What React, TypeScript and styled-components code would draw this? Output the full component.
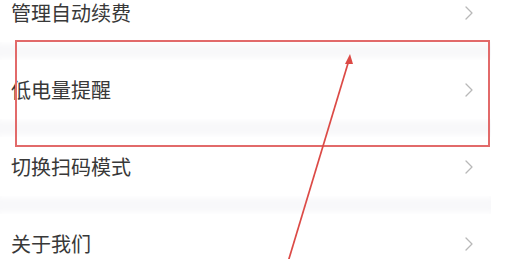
import React from 'react';
import styled, { createGlobalStyle } from 'styled-components';

const GlobalStyle = createGlobalStyle`
    html, body {
        margin: 0;
        padding: 0;
        background: #ffffff;
        overflow: hidden;
    }
    body {
        font-family: 'Noto Sans CJK SC', 'Noto Sans', sans-serif;
    }
`;

const items = ['管理自动续费', '低电量提醒', '切换扫码模式', '关于我们'];

const Chevron = () => (
    <svg width="8" height="14" viewBox="0 0 8 14">
        <polyline
            points="1,1 7,7 1,13"
            fill="none"
            stroke="#b8b8b8"
            strokeWidth="1.3"
            strokeLinecap="round"
            strokeLinejoin="round"
        />
    </svg>
);

const App = () => {
    return (
        <Page>
            <GlobalStyle />
            <List>
                {items.map((label, i) => (
                    <Row key={label} $first={i === 0}>
                        <Label>{label}</Label>
                        <Chevron />
                    </Row>
                ))}
            </List>
            <Highlight />
            <Arrow width="507" height="259" viewBox="0 0 507 259">
                <line x1="288" y1="262" x2="349" y2="60" stroke="#dc4a46" strokeWidth="1.7" />
                <polygon points="350,54 345,64 353,64" fill="#dc4a46" />
            </Arrow>
        </Page>
    );
};

const Page = styled.div`
    position: relative;
    width: 507px;
    height: 259px;
    overflow: hidden;
    background: #ffffff;
`;

const List = styled.div`
    width: 491px;
    display: flex;
    flex-direction: column;
    gap: 18px;
    background: #f8f8fa;
`;

const Row = styled.div<{ $first?: boolean }>`
    box-sizing: border-box;
    height: ${(p) => (p.$first ? '42px' : '59px')};
    display: flex;
    align-items: center;
    justify-content: space-between;
    padding: ${(p) => (p.$first ? '0 18px 16px 11px' : '0 18px 0 11px')};
    background: #ffffff;
    box-shadow: 0 0 6px 2px #ffffff;
`;

const Label = styled.span`
    font-size: 20px;
    line-height: 1;
    color: #383838;
`;

const Highlight = styled.div`
    position: absolute;
    left: 15px;
    top: 40px;
    width: 471px;
    height: 103px;
    border: 2px solid #e26a6a;
`;

const Arrow = styled.svg`
    position: absolute;
    left: 0;
    top: 0;
    pointer-events: none;
`;

export default App;
